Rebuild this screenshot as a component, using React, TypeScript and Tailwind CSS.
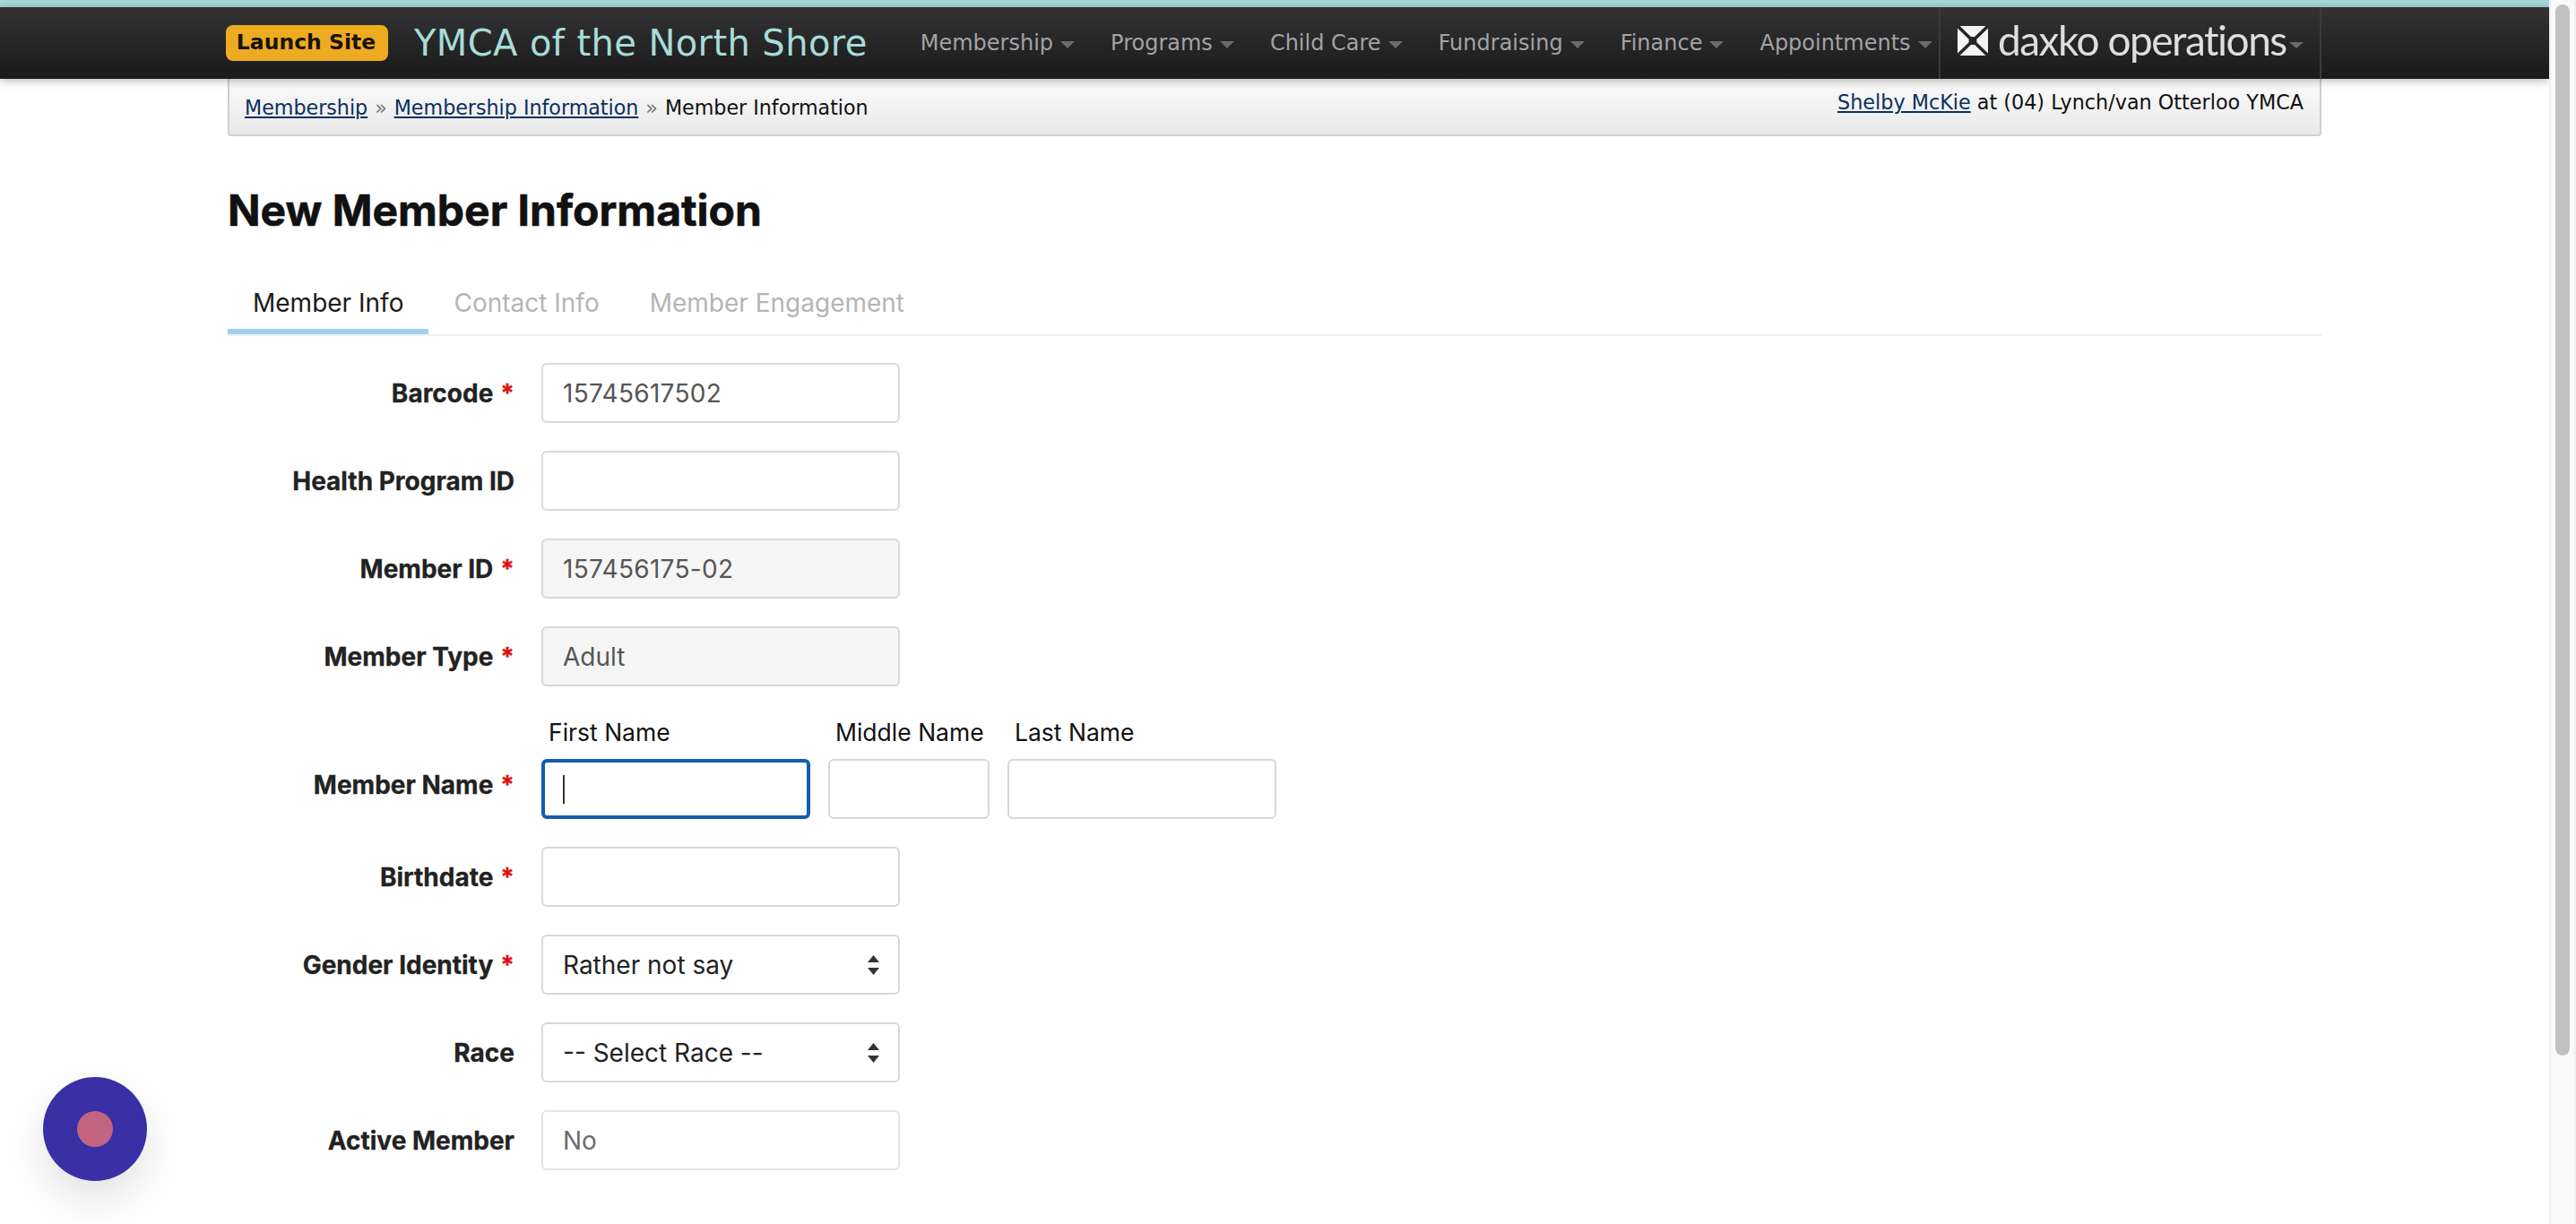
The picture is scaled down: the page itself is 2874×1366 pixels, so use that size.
import React from 'react';

const NAV = ['Membership', 'Programs', 'Child Care', 'Fundraising', 'Finance', 'Appointments'];

function Caret() {
  return <span className="ml-2 mt-1 inline-block h-0 w-0 border-x-[8px] border-t-[8px] border-x-transparent border-t-[#6b6b6b]" />;
}

function TopNav() {
  return (
    <header className="relative z-10 h-[80px] shrink-0 bg-gradient-to-b from-[#333335] to-[#1a1a1a] shadow-[0_2px_10px_rgba(0,0,0,0.3)] font-['DejaVu_Sans',sans-serif]">
      <div className="mx-[254px] flex h-full items-center">
        <a className="-ml-[2px] flex h-[40px] w-[181px] items-center justify-center rounded-[8px] bg-[#ecab20] pr-[2px] text-[23.5px] font-bold text-[#1a1208]">
          Launch Site
        </a>
        <span className="ml-[29px] text-[40px] leading-none text-[#a7dcd8] tracking-[0.4px]">YMCA of the North Shore</span>
        <nav className="ml-[59px] flex items-center gap-[40px] text-[24px] text-[#a3a3a3]">
          {NAV.map((item) => (
            <a key={item} className="flex items-center whitespace-nowrap">
              {item}
              <Caret />
            </a>
          ))}
        </nav>
        <div className="absolute bottom-0 left-[2163px] top-0 flex w-[427px] items-center border-x-2 border-[#3b3b3b] pl-[19px]">
          <svg width="34" height="33" viewBox="0 0 34 33" className="-mt-[6px] shrink-0 blur-[0.5px]">
            <rect width="34" height="33" rx="4" fill="#f4f4f4" />
            <path d="M0 0 L34 33 M34 0 L0 33" stroke="#252525" strokeWidth="3.5" fill="none" />
            <circle cx="17" cy="16.5" r="4.5" fill="#252525" />
          </svg>
          <span className="-mt-[6px] ml-[11px] whitespace-nowrap font-['Lato',sans-serif] text-[46px] leading-none tracking-[-1.5px] text-[#dedede] blur-[0.6px]">
            daxko operations
          </span>
          <span className="ml-[3px] mt-1 inline-block h-0 w-0 border-x-[8px] border-t-[7px] border-x-transparent border-t-[#6b6b6b]" />
        </div>
      </div>
    </header>
  );
}

function Breadcrumbs() {
  return (
    <div className="flex h-[64px] justify-between rounded-b-[4px] border-x-2 border-b-2 border-[#cfcfcf] bg-gradient-to-b from-[#fbfbfb] to-[#e9e9e9] pl-[17px] pr-[18px] font-['DejaVu_Sans',sans-serif] text-[22.3px] text-[#111]">
      <div className="pt-[16px] text-[22.2px]">
        <a className="text-[#0b2f5f] underline">Membership</a>
        <span className="mx-[8px] text-[#777]">»</span>
        <a className="text-[#0b2f5f] underline">Membership Information</a>
        <span className="mx-[8px] text-[#777]">»</span>
        <span>Member Information</span>
      </div>
      <div className="pt-[10px]">
        <a className="text-[#0b2f5f] underline">Shelby McKie</a> at (04) Lynch/van Otterloo YMCA
      </div>
    </div>
  );
}

function Tabs() {
  return (
    <div className="mt-[50px] flex h-[60px] border-b-2 border-[#efefef] text-[28px] text-[#b5b5b5]">
      <a className="h-[58px] border-b-[6px] border-[#a3d0f0] px-[28px] pt-[2px] text-[#1a1a1a]">Member Info</a>
      <a className="px-[28px] pt-[2px]">Contact Info</a>
      <a className="px-[28px] pt-[2px]">Member Engagement</a>
    </div>
  );
}

function Label({ text, required }: { text: string; required?: boolean }) {
  return (
    <label className="w-[320px] shrink-0 text-right text-[28px] font-bold text-[#222] [-webkit-text-stroke:0.3px_#222]">
      {text}
      {required && <span className="ml-[8px] text-[#e01010] [-webkit-text-stroke:0.3px_#e01010]">*</span>}
    </label>
  );
}

const boxClass = 'h-[67px] rounded-[6px] border-2 border-[#d8d8d8] outline-none';

function Field({ label, required, value, disabled, numeric, muted }: { label: string; required?: boolean; value?: string; disabled?: boolean; numeric?: boolean; muted?: boolean }) {
  return (
    <div className="mb-[31px] flex items-center gap-[30px]">
      <Label text={label} required={required} />
      <input
        readOnly
        value={value ?? ''}
        className={`h-[67px] w-[400px] rounded-[6px] border-2 px-[22px] text-[28px] outline-none ${muted ? 'border-[#e4e4e4] text-[#6b6b6b]' : 'border-[#d8d8d8] text-[#555]'} ${disabled ? 'bg-[#f5f5f5]' : 'bg-white'} ${numeric ? 'tracking-[0.3px]' : ''}`}
      />
    </div>
  );
}

function SelectField({ label, required, value }: { label: string; required?: boolean; value: string }) {
  return (
    <div className="mb-[31px] flex items-center gap-[30px]">
      <Label text={label} required={required} />
      <div className="relative">
        <select defaultValue={value} className={`${boxClass} w-[400px] appearance-none bg-white px-[22px] text-[28px] text-[#222]`}>
          <option>{value}</option>
        </select>
        <svg width="13" height="22" viewBox="0 0 13 22" className="absolute right-[23px] top-[23px]">
          <path d="M6.5 0 L13 8 L0 8 Z M0 14 L13 14 L6.5 22 Z" fill="#333" />
        </svg>
      </div>
    </div>
  );
}

function NameCol({ title, width, children }: { title: string; width: string; children: React.ReactNode }) {
  return (
    <div className={width}>
      <div className="mb-[12px] pl-[8px] text-[26.5px] leading-[36px] text-[#111]">{title}</div>
      {children}
    </div>
  );
}

function NameRow() {
  return (
    <div className="mb-[31px] flex items-end gap-[30px] pt-[2px]">
      <div className="flex h-[77px] w-[320px] items-center">
        <Label text="Member Name" required />
      </div>
      <div className="flex gap-[20px]">
        <NameCol title="First Name" width="w-[300px]">
          <div className="relative">
            <input readOnly className="block h-[67px] w-[300px] rounded-[6px] border-[4px] border-[#175cb0] bg-white outline-none" />
            <div className="absolute left-[24px] top-[18px] h-[32px] w-[2px] bg-[#333]" />
          </div>
        </NameCol>
        <NameCol title="Middle Name" width="w-[180px]">
          <input readOnly className={`${boxClass} block w-[180px] bg-white`} />
        </NameCol>
        <NameCol title="Last Name" width="w-[300px]">
          <input readOnly className={`${boxClass} block w-[300px] bg-white`} />
        </NameCol>
      </div>
    </div>
  );
}

function Scrollbar() {
  return (
    <div className="flex h-full w-[30px] shrink-0 justify-center border-x-2 border-[#efefef] bg-[#fafafa]">
      <div className="mt-[5px] h-[1173px] w-[16px] rounded-full bg-[#c1c1c1]" />
    </div>
  );
}

export default function App() {
  return (
    <div className="flex h-screen overflow-hidden bg-white font-['Inter',sans-serif]">
      <div className="relative min-w-0 flex-1 overflow-hidden">
        <div className="h-[8px] bg-[#a7d9d8]" />
        <TopNav />
        <main className="mx-[254px]">
          <Breadcrumbs />
          <h1 className="mt-[53px] text-[48px] font-bold leading-[60px] text-[#111] [-webkit-text-stroke:0.6px_#111]">New Member Information</h1>
          <Tabs />
          <form className="mt-[30px]">
            <Field label="Barcode" required value="15745617502" numeric />
            <Field label="Health Program ID" />
            <Field label="Member ID" required value="157456175-02" disabled numeric />
            <Field label="Member Type" required value="Adult" disabled />
            <NameRow />
            <Field label="Birthdate" required />
            <SelectField label="Gender Identity" required value="Rather not say" />
            <SelectField label="Race" value="-- Select Race --" />
            <Field label="Active Member" value="No" muted />
          </form>
        </main>
        {/* chat launcher floats over the page */}
        <div className="absolute left-[48px] top-[1202px] flex h-[116px] w-[116px] items-center justify-center rounded-full bg-[#3830a4] shadow-[0_20px_50px_rgba(0,0,0,0.12)]">
          <div className="h-[40px] w-[40px] rounded-full bg-[#c2647f]" />
        </div>
      </div>
      <Scrollbar />
    </div>
  );
}
